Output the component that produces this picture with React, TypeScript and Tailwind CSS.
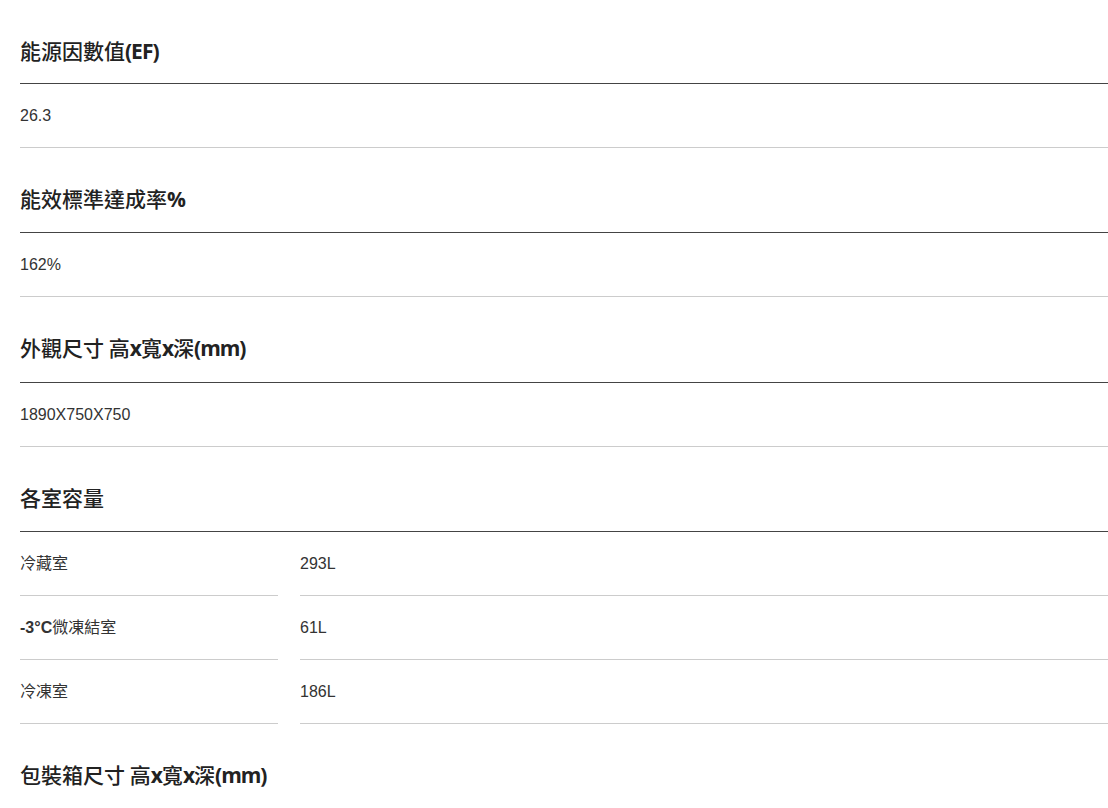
import React from "react";

type Part = { t: string; b?: boolean };

function Heading({ parts, size }: { parts: Part[]; size: "first" | "mid" | "tall" }) {
  const box =
    size === "first"
      ? "h-[84px] pt-[36px]"
      : size === "tall"
      ? "h-[86px] pt-[36px]"
      : "h-[85px] pt-[36px]";
  return (
    <div className={`${box} border-b border-[#444444] text-[21px] leading-[28px] text-[#222222]`}>
      {parts.map((p, i) => (
        <span
          key={i}
          className={
            p.b
              ? "font-bold tracking-[-1px] font-['Open_Sans',sans-serif]"
              : "font-medium font-['Noto_Sans_CJK_TC',sans-serif]"
          }
        >
          {p.t}
        </span>
      ))}
    </div>
  );
}

const cellText = "text-[16px] text-[#333333] font-['Liberation_Sans','Noto_Sans_CJK_TC',sans-serif]";

function Value({ children }: { children: React.ReactNode }) {
  return (
    <div className={`h-[64px] flex items-center border-b border-[#cccccc] ${cellText}`}>
      {children}
    </div>
  );
}

export default function App() {
  const rows: { label: React.ReactNode; value: string }[] = [
    { label: "冷藏室", value: "293L" },
    {
      label: (
        <>
          <span className="font-bold">-3°C</span>微凍結室
        </>
      ),
      value: "61L",
    },
    { label: "冷凍室", value: "186L" },
  ];

  return (
    <div className="w-[1108px] min-h-[808px] bg-white pl-[20px] overflow-hidden">
      <Heading size="first" parts={[{ t: "能源因數值" }, { t: "(EF)", b: true }]} />
      <Value>26.3</Value>

      <Heading size="mid" parts={[{ t: "能效標準達成率" }, { t: "%", b: true }]} />
      <Value>162%</Value>

      <Heading
        size="tall"
        parts={[
          { t: "外觀尺寸 高" },
          { t: "x", b: true },
          { t: "寬" },
          { t: "x", b: true },
          { t: "深" },
          { t: "(mm)", b: true },
        ]}
      />
      <Value>1890X750X750</Value>

      <Heading size="mid" parts={[{ t: "各室容量" }]} />
      <div className="flex flex-col">
        {rows.map((r, i) => (
          <div key={i} className="flex gap-[22px]">
            <div className={`w-[258px] h-[64px] flex items-center border-b border-[#cccccc] ${cellText}`}>
              {r.label}
            </div>
            <div className={`flex-1 h-[64px] flex items-center border-b border-[#cccccc] ${cellText}`}>
              {r.value}
            </div>
          </div>
        ))}
      </div>

      <Heading
        size="mid"
        parts={[
          { t: "包裝箱尺寸 高" },
          { t: "x", b: true },
          { t: "寬" },
          { t: "x", b: true },
          { t: "深" },
          { t: "(mm)", b: true },
        ]}
      />
    </div>
  );
}
